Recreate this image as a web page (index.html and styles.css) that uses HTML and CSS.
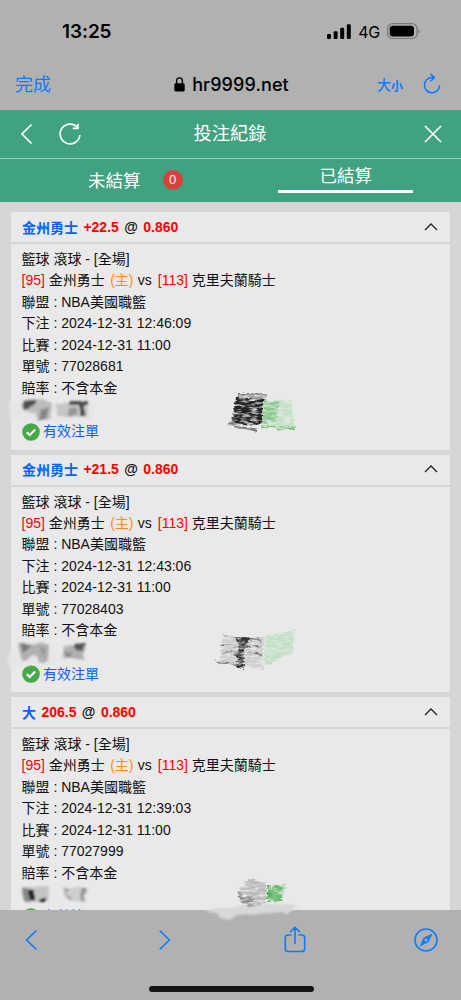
FILE: index.html
```html
<!DOCTYPE html>
<html lang="zh-Hant">
<head>
<meta charset="utf-8">
<meta name="viewport" content="width=device-width, initial-scale=1">
<title>投注紀錄</title>
<link rel="stylesheet" href="styles.css">
</head>
<body>
<div class="screen">
  <div class="status">
    <span class="clock">13:25</span>
    <span class="signals">
      <svg width="24" height="15" viewBox="0 0 24 15"><rect x="0" y="10" width="4" height="5" rx="1.2"/><rect x="6.6" y="7.3" width="4" height="7.7" rx="1.2"/><rect x="13.2" y="3.8" width="4" height="11.2" rx="1.2"/><rect x="19.8" y="0.3" width="4" height="14.7" rx="1.2"/></svg>
      <span class="network">4G</span>
      <svg width="34" height="17" viewBox="0 0 34 17"><rect x=".7" y=".7" width="29.3" height="14.8" rx="4.8" fill="none" stroke="#777" stroke-width="1.2"/><rect x="2.7" y="2.7" width="24.3" height="10.8" rx="3.2"/><path d="M31.4 5.7q2.4 2.5 0 5z" fill="#777"/></svg>
    </span>
  </div>
  <div class="address">
    <span class="done">完成</span>
    <span class="host"><svg width="11" height="15" viewBox="0 0 11 15"><path d="M2.6 7V4.1a2.9 3.2 0 0 1 5.8 0V7" fill="none" stroke="#000" stroke-width="1.4"/><rect x=".3" y="6.2" width="10.4" height="8.3" rx="1.5"/></svg>hr9999.net</span>
    <span class="tools"><span class="size-lg">大</span><span class="size-sm">小</span>
      <svg width="20" height="22" viewBox="0 0 20 22" fill="none" stroke="#0a7cff" stroke-width="1.5" stroke-linecap="round" stroke-linejoin="round"><path d="M17.6 12.8A7.6 7.6 0 1 1 10 4.6h2M8.8 1.2 12.4 4.6 8.8 8"/></svg>
    </span>
  </div>

  <header class="topbar">
    <svg class="back" width="13" height="22" viewBox="0 0 13 22"><path d="M11.5 1.5 2 11l9.5 9.5"/></svg>
    <svg class="reload" width="24" height="24" viewBox="0 0 24 24"><path d="M19.8 5.8A9.9 9.9 0 1 0 21.9 13M20 1.8v4.6h-5.2"/></svg>
    <h1>投注紀錄</h1>
    <svg class="close" width="18" height="18" viewBox="0 0 18 18"><path d="m1 1 16 16M17 1 1 17"/></svg>
  </header>
  <nav class="tabs">
    <div class="tab open">未結算<span class="badge">0</span></div>
    <div class="tab active"><span class="tab-label">已結算</span></div>
  </nav>

  <main class="list">
    <article class="card">
      <div class="card-head"><span class="pick">金州勇士</span> <span class="red">+22.5</span> @ <span class="red">0.860</span><svg class="chev" width="14" height="8" viewBox="0 0 14 8"><path d="m1 7 6-6 6 6"/></svg></div>
      <div class="card-body">
        <p>籃球 滾球 - [全場]</p>
        <p><span class="red">[95]</span> 金州勇士 <span class="home">(主)</span> vs <span class="red away">[113]</span> 克里夫蘭騎士</p>
        <p>聯盟 : NBA美國職籃</p>
        <p>下注 : 2024-12-31 12:46:09</p>
        <p>比賽 : 2024-12-31 11:00</p>
        <p>單號 : 77028681</p>
        <p>賠率 : 不含本金</p>
        <p class="valid"><svg width="18" height="18" viewBox="0 0 18 18"><circle cx="9" cy="9" r="8.8" fill="#45a849"/><path d="m4.8 9.2 2.9 2.9 5.5-5.5" fill="none" stroke="#fff" stroke-width="2.1"/></svg>有效注單</p>
      </div>
    </article>
    <article class="card">
      <div class="card-head"><span class="pick">金州勇士</span> <span class="red">+21.5</span> @ <span class="red">0.860</span><svg class="chev" width="14" height="8" viewBox="0 0 14 8"><path d="m1 7 6-6 6 6"/></svg></div>
      <div class="card-body">
        <p>籃球 滾球 - [全場]</p>
        <p><span class="red">[95]</span> 金州勇士 <span class="home">(主)</span> vs <span class="red away">[113]</span> 克里夫蘭騎士</p>
        <p>聯盟 : NBA美國職籃</p>
        <p>下注 : 2024-12-31 12:43:06</p>
        <p>比賽 : 2024-12-31 11:00</p>
        <p>單號 : 77028403</p>
        <p>賠率 : 不含本金</p>
        <p class="valid"><svg width="18" height="18" viewBox="0 0 18 18"><circle cx="9" cy="9" r="8.8" fill="#45a849"/><path d="m4.8 9.2 2.9 2.9 5.5-5.5" fill="none" stroke="#fff" stroke-width="2.1"/></svg>有效注單</p>
      </div>
    </article>
    <article class="card">
      <div class="card-head"><span class="pick">大</span> <span class="red">206.5</span> @ <span class="red">0.860</span><svg class="chev" width="14" height="8" viewBox="0 0 14 8"><path d="m1 7 6-6 6 6"/></svg></div>
      <div class="card-body">
        <p>籃球 滾球 - [全場]</p>
        <p><span class="red">[95]</span> 金州勇士 <span class="home">(主)</span> vs <span class="red away">[113]</span> 克里夫蘭騎士</p>
        <p>聯盟 : NBA美國職籃</p>
        <p>下注 : 2024-12-31 12:39:03</p>
        <p>比賽 : 2024-12-31 11:00</p>
        <p>單號 : 77027999</p>
        <p>賠率 : 不含本金</p>
        <p class="valid"><svg width="18" height="18" viewBox="0 0 18 18"><circle cx="9" cy="9" r="8.8" fill="#45a849"/><path d="m4.8 9.2 2.9 2.9 5.5-5.5" fill="none" stroke="#fff" stroke-width="2.1"/></svg>有效注單</p>
      </div>
    </article>
  </main>

  <footer class="toolbar">
    <div class="actions">
      <svg width="12" height="20" viewBox="0 0 12 20"><path d="M10.8 1 1.6 10l9.2 9"/></svg>
      <svg class="forward" width="12" height="20" viewBox="0 0 12 20"><path d="m1.2 1 9.2 9-9.2 9"/></svg>
      <svg class="share" width="22" height="27" viewBox="0 0 22 27"><path d="M7 9H4Q1.3 9 1.3 11.7v11.1q0 2.7 2.7 2.7h14q2.7 0 2.7-2.7V11.7Q20.7 9 18 9h-3M11 17.5V1.5M6.5 5.7 11 1.3l4.5 4.4"/></svg>
      <svg class="compass" width="24" height="24" viewBox="0 0 24 24"><circle cx="12" cy="12" r="11"/><path d="M17.7 6.3 10 9.8 6.3 17.7 14 14z" fill="#0a7cff" stroke-width=".8"/><circle cx="12" cy="12" r="1.4" fill="#b1b1b1" stroke="none"/></svg>
    </div>
    <div class="home-bar"></div>
  </footer>

  <svg class="marker" width="461" height="1000" viewBox="0 0 461 1000" aria-hidden="true">
    <defs>
      <filter id="pencil" x="-20%" y="-20%" width="140%" height="140%">
        <feTurbulence type="fractalNoise" baseFrequency=".12 .4" numOctaves="3" seed="8" result="n"/>
        <feDisplacementMap in="SourceGraphic" in2="n" scale="6" xChannelSelector="R" yChannelSelector="G" result="d"/>
        <feColorMatrix in="n" values="0 0 0 0 0  0 0 0 0 0  0 0 0 0 0  0 0 0 2.4 -.4" result="m"/>
        <feComposite in="d" in2="m" operator="in"/>
        <feGaussianBlur stdDeviation=".7"/>
      </filter>
      <filter id="smudge" x="-20%" y="-20%" width="140%" height="140%">
        <feTurbulence type="fractalNoise" baseFrequency=".08 .16" numOctaves="2" seed="4" result="n"/>
        <feDisplacementMap in="SourceGraphic" in2="n" scale="4" xChannelSelector="R" yChannelSelector="G"/>
        <feGaussianBlur stdDeviation="1.1"/>
      </filter>
    </defs>
    <g filter="url(#smudge)">
      <path d="M9 403h83v16H22l-11 3zM9 652h79l-4 8-75 8z" fill="#e6e6e6"/>
      <path d="m23 400 20-1 9 5-2 15-12 3-2-9-14-4z" fill="#bbb"/><path d="m24 401 13-1-3 6-11 3z" fill="#505050"/><path d="M41 409l8-2-3 13-7 1z" fill="#888"/>
      <path d="M56 403h32v14l-32-1z" fill="#c6c6c6"/><path d="M68 401h20v4H68zM80 403h5v13h-5z" fill="#505050"/><path d="m68 408 9-1v8h-9z" fill="#999"/>
      <path d="m18 643 31 1-1 17-8 2-4-8-14 7z" fill="#b0b0b0"/><path d="m21 643 12 2-10 8z" fill="#777"/><path d="m39 646 7 3-2 10z" fill="#999"/>
      <path d="m64 646 22-3-3 17-20-3z" fill="#b0b0b0"/><path d="m74 644 12-1-4 8-6-1z" fill="#555"/><path d="m63 651 9 3-3 4z" fill="#888"/>
      <path d="m21 887 28-1v15l-24 2z" fill="#c5c5c5"/><path d="m22 888 12 2v12l-10-1z" fill="#888"/><path d="M28 890h6v11h-5zM41 898h6v4h-7z" fill="#222"/>
      <path d="m62 887 26 1-3 14-20-2z" fill="#cecece"/><path d="m64 889 7-1-5 6 7 4-3 3zM81 888h5l-3 13h-3z" fill="#929292"/>
      <path d="m205 911 38-6 46-1 9 2-12 9-3-3-45 4-10 3-10-1 2-3z" fill="#d8d8d8"/>
    </g>
    <g filter="url(#pencil)">
      <path d="m237 395 30-1-4 31-33-1z" fill="#999"/>
      <path d="m236 398 27 2 1 25-32-2z" fill="#202020"/><path d="M238 394h28M229 424l28 7" stroke="#777" stroke-width="2"/>
      <path d="m264 400 28 0 3 28-34-3z" fill="#c5e1c6"/><path d="m265 401 15 1-6 22-12-1z" fill="#8bc98e"/><path d="M260 426l35 1v3l-35-2z" fill="#66bd6b"/>
      <path d="m223 637 41 1-1 31-43-6z" fill="#cdcdcd"/><path d="m236 639 17-1-8 7-1 23-8-1 2-21z" fill="#333"/><path d="m214 661 27 4M224 636l38 4M221 653l42 1M221 645l40 2" fill="none" stroke="#777" stroke-width="1.7"/>
      <path d="m266 636 29-6-3 23-28 13z" fill="#c1e0c4"/>
      <path d="m248 879 18 4 0 20-17 6-12-16z" fill="#bbb"/><path d="m238 893 14 3 3 12-15-6z" fill="#8b8b8b"/>
      <path d="m267 886 15 0-1 15-14 1z" fill="#4daf56"/><path d="m270 887 17-4-5 17-13 1z" fill="#80c887" opacity=".6"/>
    </g>
  </svg>
</div>
</body>
</html>
```
FILE: styles.css
```css
* { box-sizing: border-box; }
body { margin: 0; background: #b1b1b1; font-family: "Liberation Sans", "Noto Sans CJK TC", sans-serif; color: #111; }
svg { display: block; flex: none; }
.screen { position: relative; width: 461px; height: 1000px; overflow: hidden; display: flex; flex-direction: column; }

.status { height: 62px; flex: none; display: flex; justify-content: space-between; align-items: center; padding: 1px 40px 0 62px; font-family: Inter, sans-serif; color: #000; }
.clock { font-size: 19px; font-weight: 600; letter-spacing: -.1px; }
.signals { display: flex; align-items: center; gap: 7px; }
.network { font-size: 16px; font-weight: 400; letter-spacing: -.3px; }

.address { height: 48px; flex: none; display: grid; grid-template-columns: 1fr auto 1fr; align-items: center; padding: 0 19px 4px 15px; color: #0a7cff; }
.done { padding-bottom: 2px; font: 18px "Noto Sans CJK TC", sans-serif; }
.host { display: flex; align-items: center; gap: 7px; padding-left: 6px; color: #000; font: 500 18px Inter, sans-serif; letter-spacing: .1px; }
.tools { display: flex; justify-content: flex-end; align-items: center; font: 500 14px "Noto Sans CJK TC", sans-serif; }
.size-sm { font-size: 12px; font-weight: 700; padding-top: 2px; }
.tools svg { margin-left: 19px; }

.topbar { height: 48px; flex: none; display: flex; align-items: center; padding: 0 19px 0 20px; background: #40a280; color: #fff; }
.topbar path { fill: none; stroke: #fff; stroke-width: 1.7; }
.reload { margin-left: 25px; }
.topbar h1 { flex: 1; margin: 0; padding-right: 46px; font-size: 18.3px; font-weight: 400; line-height: 1; text-align: center; }
.tabs { height: 44px; flex: none; display: grid; grid-template-columns: 1fr 1fr; background: #40a280; color: #fff; border-top: 1px solid #aac5b9; font-size: 17.5px; }
.open { display: flex; align-items: center; padding: 0 0 2px 88px; }
.badge { width: 20px; height: 20px; margin: 1px 0 0 22px; border-radius: 50%; background: #d8423c; font-size: 13px; line-height: 20px; text-align: center; }
.active { display: flex; justify-content: center; }
.tab-label { width: 135px; height: 34px; border-bottom: 3px solid #fff; text-align: center; line-height: 34px; }

.list { flex: 1; min-height: 0; overflow: hidden; display: flex; flex-direction: column; gap: 5px; padding: 10px 11px 0; background: #d6d6d6; }
.card { height: 237.5px; flex: none; background: #e9e9e9; font-size: 14px; }
.card-head { height: 32px; display: flex; align-items: center; gap: 5.4px; padding: 0 12px 1px 11px; border-bottom: 2px solid #d6d6d6; font-weight: 700; }
.pick { color: #0a60ff; }
.red { color: #f00; }
.home { margin: 0 .5px 0 1.5px; color: #ff8d19; }
.away { margin-left: 2px; }
.chev { margin-left: auto; }
.chev path { fill: none; stroke: #222; stroke-width: 1.3; }
.card-body { padding: 5px 11px 0 10.5px; }
.card-body p { height: 21.45px; margin: 0; line-height: 21.45px; white-space: nowrap; }
.card-body .valid { display: flex; align-items: center; gap: 3.5px; margin-top: 22px; color: #0a60ff; }

.toolbar { height: 90px; flex: none; display: flex; flex-direction: column; align-items: center; justify-content: space-between; padding: 16px 23px 8.5px 25px; background: #b1b1b1; }
.actions { width: 100%; display: flex; align-items: center; }
.actions svg { fill: none; stroke: #0a7cff; stroke-width: 1.6; stroke-linecap: round; stroke-linejoin: round; }
.forward { margin-left: 122px; }
.share { margin-left: 113px; }
.compass { margin-left: auto; }
.home-bar { width: 165px; height: 5.5px; border-radius: 3px; background: #151515; }
.marker { position: absolute; left: 0; top: 0; pointer-events: none; }
```
